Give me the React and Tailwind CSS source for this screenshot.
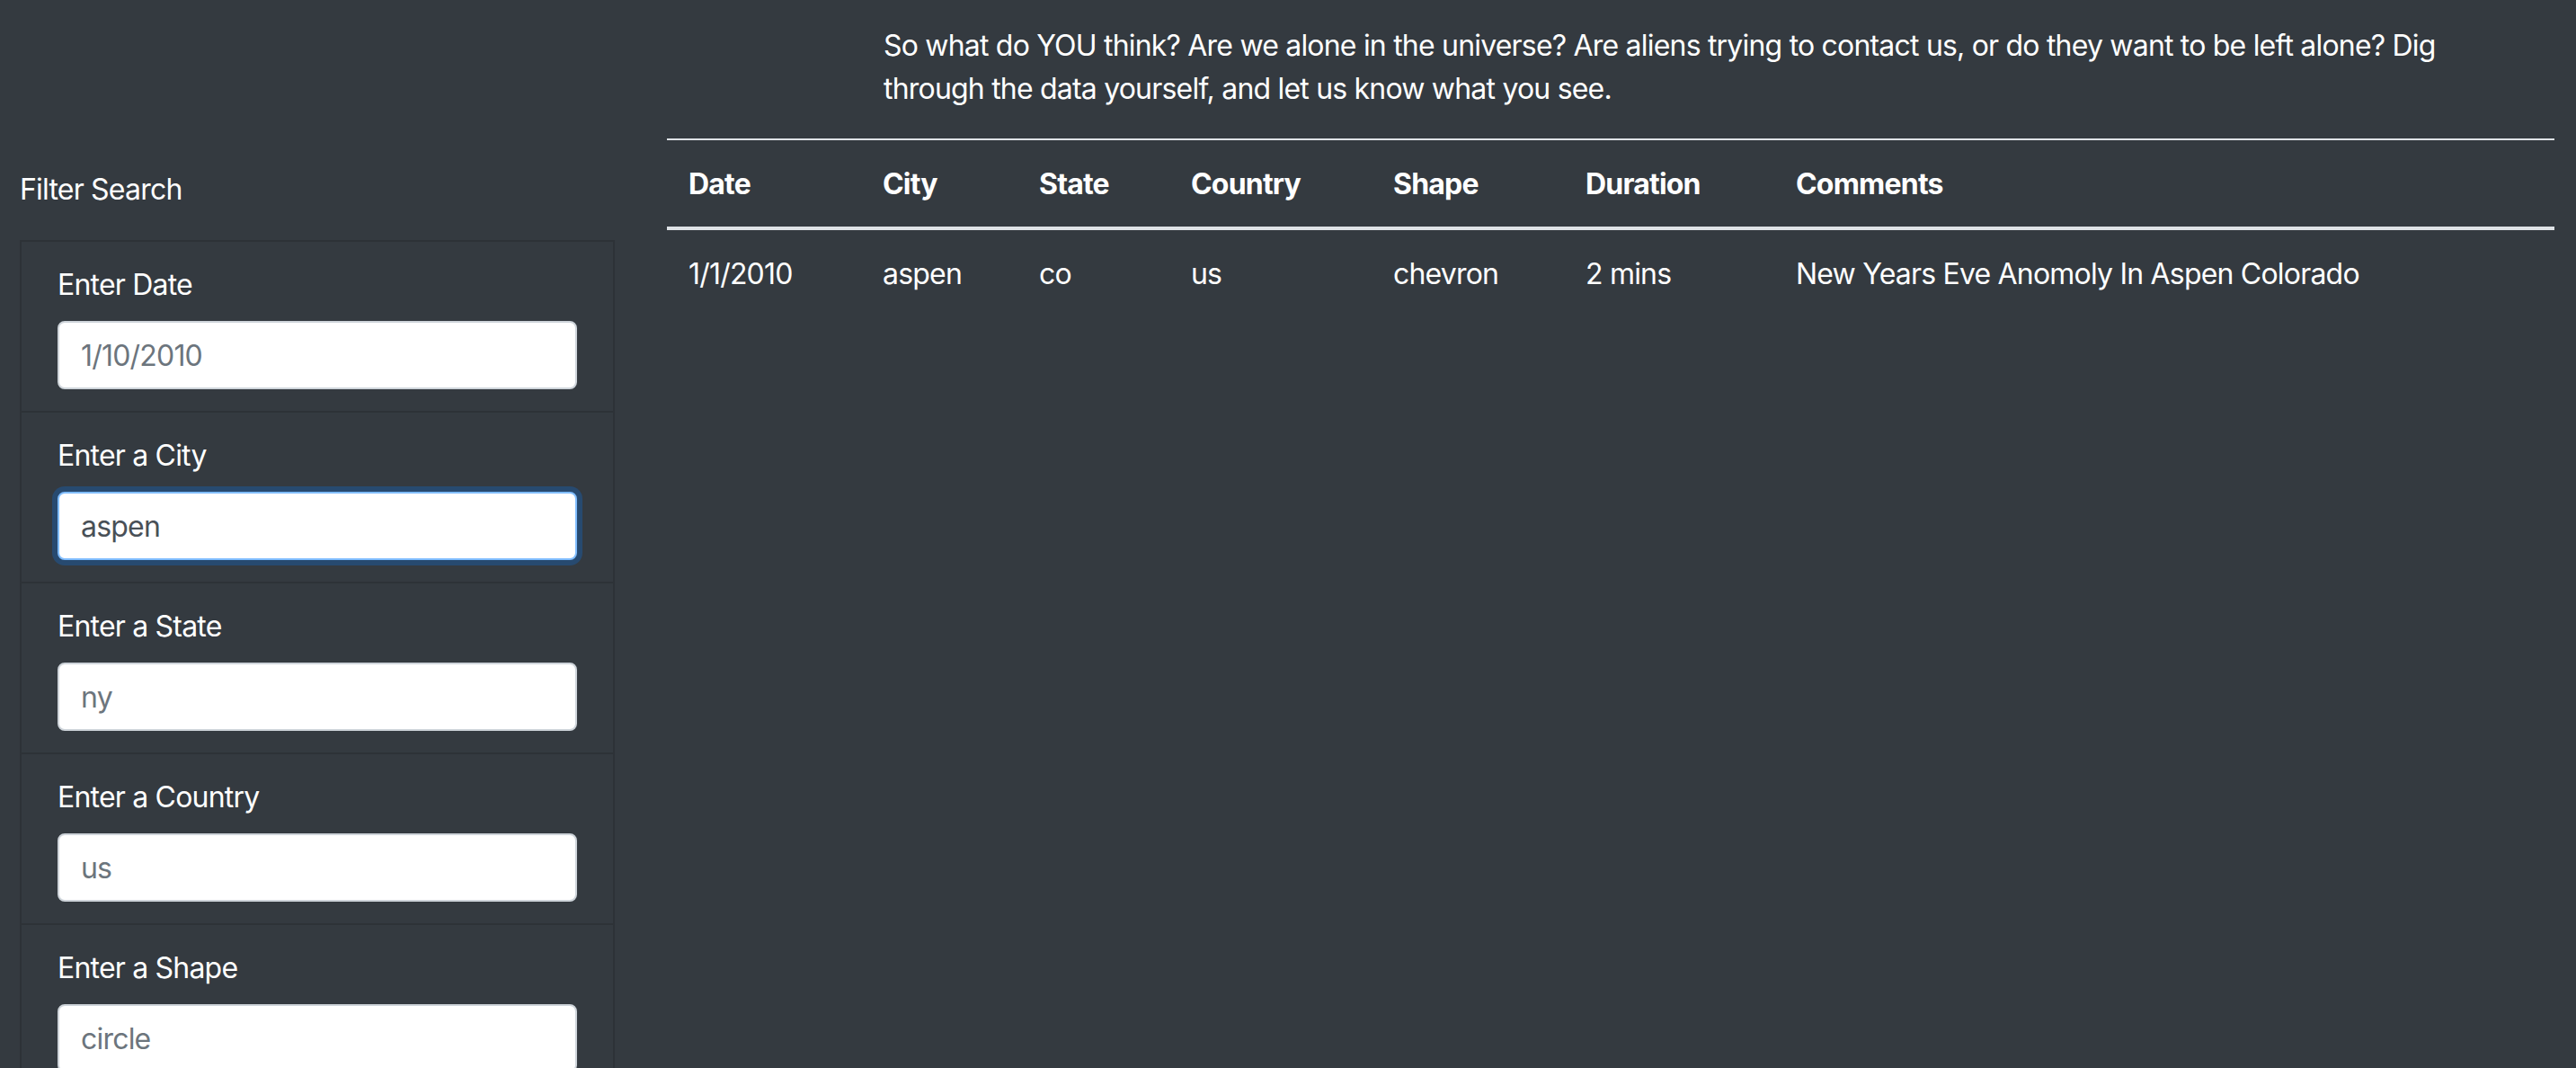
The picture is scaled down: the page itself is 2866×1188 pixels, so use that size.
import React from "react";

const fields = [
  { label: "Enter Date", placeholder: "1/10/2010" },
  { label: "Enter a City", value: "aspen", focused: true },
  { label: "Enter a State", placeholder: "ny" },
  { label: "Enter a Country", placeholder: "us" },
  { label: "Enter a Shape", placeholder: "circle" },
];

const cols = [
  { name: "Date", w: "w-[216px]" },
  { name: "City", w: "w-[174px]" },
  { name: "State", w: "w-[169px]" },
  { name: "Country", w: "w-[225px]" },
  { name: "Shape", w: "w-[214px]" },
  { name: "Duration", w: "w-[234px]" },
  { name: "Comments", w: "w-[868px]" },
];

const row = ["1/1/2010", "aspen", "co", "us", "chevron", "2 mins", "New Years Eve Anomoly In Aspen Colorado"];

export default function App() {
  return (
    <div className="min-h-screen bg-[#343a40] text-white font-['Inter','Helvetica_Neue','Liberation_Sans',sans-serif] text-[32px] leading-[48px] tracking-[-0.8px]">
      <div className="pl-[983px] pt-[27px] pb-[31px]">
        <p className="w-[1790px]">
          So what do YOU think? Are we alone in the universe? Are aliens trying to contact us, or do they want to be left alone? Dig through the data yourself, and let us know what you see.
        </p>
      </div>
      <div className="flex items-start">
        <aside className="ml-[22px] w-[662px] shrink-0 pt-[33px]">
          <div>Filter Search</div>
          <ul className="mt-[32px] border-2 border-[#2d3237]">
            {fields.map((f, i) => (
              <li
                key={f.label}
                className={
                  i === 0
                    ? "px-[40px] pt-[24px] pb-[24px]"
                    : "px-[40px] pt-[24px] pb-[24px] border-t-2 border-[#2d3237]"
                }
              >
                <label className="block mb-[16px]">{f.label}</label>
                <input
                  type="text"
                  readOnly
                  defaultValue={f.value}
                  placeholder={f.placeholder}
                  className={
                    f.focused
                      ? "block w-full h-[76px] px-[24px] bg-white rounded-[8px] border-2 border-[#80bdff] text-[#495057] shadow-[0_0_0_6px_rgba(0,123,255,0.25)] outline-none text-[32px] tracking-[-0.8px]"
                      : "block w-full h-[76px] px-[24px] bg-white rounded-[8px] border-2 border-[#ced4da] text-[#495057] placeholder:text-[#6c757d] outline-none text-[32px] tracking-[-0.8px]"
                  }
                />
              </li>
            ))}
          </ul>
        </aside>
        <main className="ml-[58px] w-[2100px] shrink-0">
          <table className="w-full table-fixed border-collapse text-left">
            <thead>
              <tr>
                {cols.map((c) => (
                  <th
                    key={c.name}
                    className={`${c.w} px-[24px] pt-[25px] pb-[23px] font-bold align-bottom border-t-2 border-b-4 border-[#dee2e6]`}
                  >
                    {c.name}
                  </th>
                ))}
              </tr>
            </thead>
            <tbody>
              <tr>
                {row.map((v, i) => (
                  <td key={i} className="px-[24px] pt-[25px] pb-[23px] align-top">
                    {v}
                  </td>
                ))}
              </tr>
            </tbody>
          </table>
        </main>
      </div>
    </div>
  );
}
